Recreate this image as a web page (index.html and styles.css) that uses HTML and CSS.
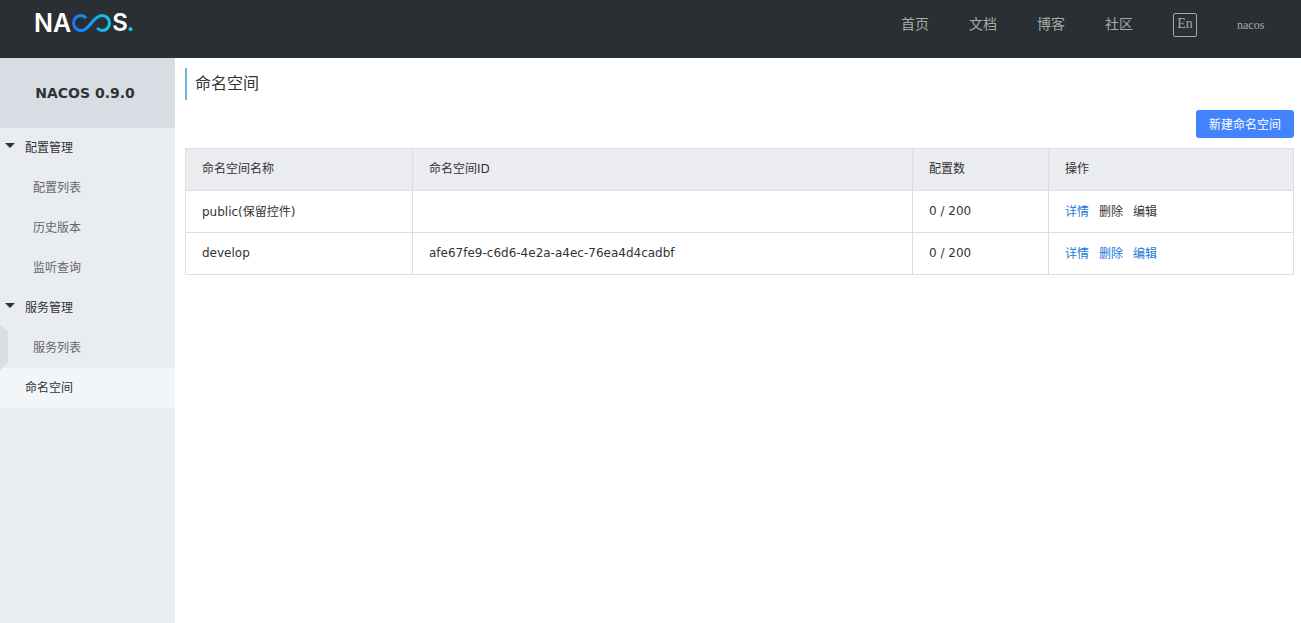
FILE: index.html
```html
<!DOCTYPE html>
<html lang="zh-CN">
<head>
  <meta charset="UTF-8" />
  <title>Nacos</title>
  <link rel="stylesheet" href="styles.css">
</head>
<body>
  <header class="header">
    <div class="logo">
      <span class="logo-text">NA</span>
      <svg class="logo-mark" width="39" height="18" viewBox="0 0 39 18">
        <defs>
          <linearGradient id="inf" x1="0" x2="1" y1="0" y2="0">
            <stop offset="0" stop-color="#1677ff" />
            <stop offset="1" stop-color="#12c8f0" />
          </linearGradient>
        </defs>
        <path d="M14 4C12.500 2.500 10.500 1.500 9 1.500 4.800 1.500 1.500 4.800 1.500 9s3.300 7.500 7.500 7.500c5 0 7.500-4 10.500-7.500s5.500-7.500 10.500-7.500c4.200 0 7.500 3.300 7.500 7.500s-3.300 7.500-7.500 7.500c-1.500 0-3.500-1-5-2.500" fill="none" stroke="url(#inf)" stroke-width="3" />
      </svg>
      <span class="logo-text logo-s">S<span class="logo-dot">.</span></span>
    </div>
    <nav class="top-nav">
      <a class="nav-link">首页</a>
      <a class="nav-link">文档</a>
      <a class="nav-link">博客</a>
      <a class="nav-link">社区</a>
      <span class="lang">En</span>
      <span class="user">nacos</span>
    </nav>
  </header>

  <div class="main">
    <aside class="sidebar">
      <div class="version">NACOS 0.9.0</div>
      <div class="menu-group"><span class="caret"></span>配置管理</div>
      <div class="menu-item">配置列表</div>
      <div class="menu-item">历史版本</div>
      <div class="menu-item">监听查询</div>
      <div class="menu-group"><span class="caret"></span>服务管理</div>
      <div class="menu-item">服务列表</div>
      <div class="menu-top active">命名空间</div>
      <div class="collapse-tab"></div>
    </aside>

    <section class="content">
      <h1 class="page-title">命名空间</h1>
      <div class="toolbar">
        <button class="btn-primary">新建命名空间</button>
      </div>
      <table class="ns-table">
        <thead>
          <tr>
            <th class="col-name">命名空间名称</th>
            <th class="col-id">命名空间ID</th>
            <th class="col-count">配置数</th>
            <th>操作</th>
          </tr>
        </thead>
        <tbody>
          <tr>
            <td>public(保留控件)</td>
            <td></td>
            <td>0 / 200</td>
            <td class="actions"><a class="link">详情</a><span class="link-off">删除</span><span class="link-off">编辑</span></td>
          </tr>
          <tr>
            <td>develop</td>
            <td>afe67fe9-c6d6-4e2a-a4ec-76ea4d4cadbf</td>
            <td>0 / 200</td>
            <td class="actions"><a class="link">详情</a><a class="link">删除</a><a class="link">编辑</a></td>
          </tr>
        </tbody>
      </table>
    </section>
  </div>
</body>
</html>
```

FILE: styles.css
```css
* {
  box-sizing: border-box;
}

html,
body {
  height: 100%;
}

body {
  margin: 0;
  background-color: #fff;
  color: #333;
  font-family: "DejaVu Sans", "Noto Sans CJK SC", sans-serif;
  font-size: 12px;
  overflow: hidden;
}

.header {
  display: flex;
  justify-content: space-between;
  height: 58px;
  background-color: #2a2f33;
  padding-left: 34px;
}

.logo {
  display: flex;
  align-items: center;
  height: 46px;
}

.logo-text {
  color: #fff;
  font-family: "Inter", sans-serif;
  font-size: 25px;
  font-weight: 600;
  line-height: 46px;
}

.logo-mark {
  margin-left: 1px;
}

.logo-s {
  margin-left: 1px;
  font-size: 24px;
  letter-spacing: -1px;
}

.logo-dot {
  color: #12c8f0;
}

.top-nav {
  display: flex;
  align-items: flex-start;
  font-family: "Liberation Serif", "Noto Sans CJK SC", serif;
  color: #a8a8a8;
}

.nav-link {
  width: 28px;
  margin-right: 40px;
  font-family: "Noto Sans CJK SC", sans-serif;
  font-size: 14px;
  line-height: 46px;
}

.lang {
  width: 24px;
  height: 24px;
  margin-top: 13px;
  border: 1px solid #a8a8a8;
  border-radius: 2px;
  font-size: 14px;
  line-height: 19px;
  text-align: center;
}

.user {
  width: 26px;
  margin-left: 40px;
  margin-right: 38px;
  font-size: 12px;
  line-height: 50px;
}

.main {
  display: flex;
  height: 565px;
}

.sidebar {
  position: relative;
  flex: 0 0 175px;
  background-color: #e9ecf1;
}

.version {
  height: 70px;
  padding-right: 5px;
  background-color: #d8dde4;
  color: #2f3237;
  font-family: "DejaVu Sans", sans-serif;
  font-size: 14px;
  font-weight: bold;
  line-height: 70px;
  text-align: center;
}

.menu-group,
.menu-top {
  height: 40px;
  padding-left: 25px;
  color: #333;
  line-height: 40px;
}

.menu-group {
  position: relative;
}

.caret {
  position: absolute;
  left: 5px;
  top: 15px;
  border-left: 5px solid transparent;
  border-right: 5px solid transparent;
  border-top: 5px solid #2f3237;
}

.menu-item {
  height: 40px;
  padding-left: 33px;
  color: #666;
  line-height: 40px;
}

.active {
  background-color: #f2f6f9;
}

.collapse-tab {
  position: absolute;
  left: 0;
  top: 266px;
  width: 8px;
  height: 46px;
  background-color: #d8dde4;
  clip-path: polygon(0 0, 100% 8px, 100% 38px, 0 100%);
}

.content {
  flex: 1;
  padding: 10px 7px 0 10px;
}

.page-title {
  height: 32px;
  margin: 0 0 10px;
  padding-left: 8px;
  border-left: 2px solid #6db3dd;
  color: #333;
  font-size: 16px;
  font-weight: normal;
  line-height: 32px;
}

.toolbar {
  display: flex;
  justify-content: flex-end;
  height: 38px;
}

.btn-primary {
  height: 28px;
  padding: 0 13px 2px;
  background-color: #4483ff;
  border: 0;
  border-radius: 3px;
  color: #fff;
  font: inherit;
}

.ns-table {
  width: 1109px;
  border-collapse: collapse;
  table-layout: fixed;
}

.ns-table th,
.ns-table td {
  height: 42px;
  padding: 0 16px 2px;
  border: 1px solid #dcdee3;
  color: #333;
  font-weight: normal;
  text-align: left;
}

.ns-table th {
  padding-bottom: 4px;
  background-color: #ebecf0;
}

.ns-table .actions {
  padding-bottom: 3px;
}

.col-name {
  width: 227px;
}

.col-id {
  width: 500px;
}

.col-count {
  width: 136px;
}

.link,
.link-off {
  margin-right: 10px;
  color: #2077dc;
}

.link-off {
  color: #333;
}
```
